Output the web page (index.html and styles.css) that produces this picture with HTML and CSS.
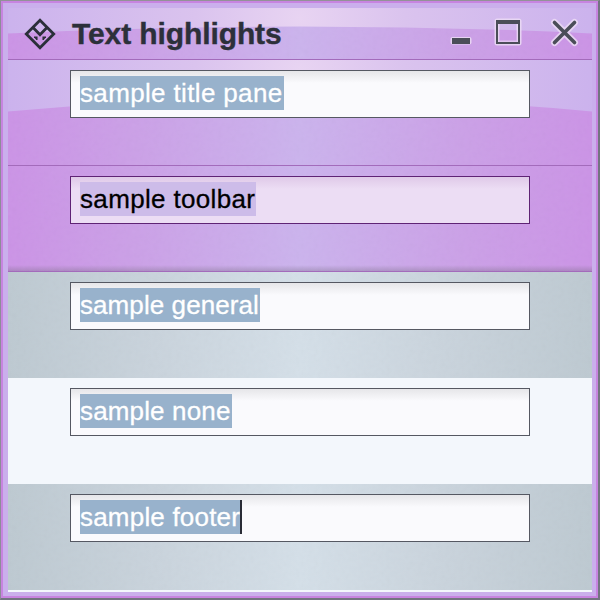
FILE: index.html
```html
<!DOCTYPE html>
<html lang="en">
<head>
<meta charset="utf-8">
<title>Text highlights</title>
<link rel="stylesheet" href="styles.css">
</head>
<body>
<main class="window">
  <div class="frame">
    <header class="titlebar">
      <svg class="gloss" viewBox="0 0 584 51" preserveAspectRatio="none"><defs><radialGradient id="shine" gradientUnits="userSpaceOnUse" cx="292" cy="10" r="300"><stop offset="0" stop-color="#e8d4f2"/><stop offset=".35" stop-color="#dac3ee"/><stop offset="1" stop-color="#cbb2ed"/></radialGradient></defs><path fill="url(#shine)" d="M0 0H584V25.5Q438 18.500 292 18.500T0 25.500Z"/></svg>
      <svg class="logo" width="32" height="32" viewBox="0 0 32 32" fill="none" stroke="#2a2f39" stroke-width="2.8"><path d="M16 2.300 29.700 16 16 29.700 2.300 16Z"/><path d="M8.500 9 16 16.800 23.500 9"/><path d="M10 19.200H12.800V22M12.800 19.200 11.300 20.700M22 19.200H19.200V22M19.200 19.200 20.700 20.700" stroke-width="1.500"/></svg>
      <h1>Text highlights</h1>
      <svg class="controls" width="152" height="40" viewBox="0 0 152 40" fill="none">
        <g stroke="#ecdcf5" stroke-opacity=".85" stroke-linejoin="round" stroke-linecap="round"><path stroke-width="4" d="M12.500 29H29.500V32.500H12.500Z"/><path stroke-width="5" d="M57 11H79V33H57Z"/><path stroke-width="7" d="M114.500 12.500 134.500 32.500M134.500 12.500 114.500 32.500"/></g>
        <path fill="#cf9fe8" fill-opacity=".25" d="M59 20H77V32H59Z"/>
        <g fill="#4b4e58"><path d="M12 28H30V34H12Z"/><path fill-rule="evenodd" d="M56 10H80V34H56ZM58 14V32H78V14Z"/></g>
        <path stroke="#4b4e58" stroke-width="3.600" stroke-linecap="round" d="M114.500 12.500 134.500 32.500M134.500 12.500 114.500 32.500"/>
      </svg>
    </header>
    <section class="pane purple">
      <svg class="gloss" viewBox="0 0 584 105" preserveAspectRatio="none"><path fill="url(#shine)" d="M0 0H584V51.500Q438 38 292 38T0 51.500Z"/></svg>
      <div class="field"><span class="mark title">sample title pane</span></div>
    </section>
    <section class="pane purple toolbar"><div class="field tinted"><span class="mark tool">sample toolbar</span></div></section>
    <section class="pane gray"><div class="field"><span class="mark general">sample general</span></div></section>
    <section class="pane none"><div class="field"><span class="mark plain">sample none</span></div></section>
    <section class="pane gray"><div class="field"><span class="mark foot">sample footer</span><i class="caret"></i></div></section>
  </div>
</main>
</body>
</html>
```
FILE: styles.css
```css
* { box-sizing: border-box; }
body { margin: 0; font-family: "Liberation Sans", sans-serif; }

.window {
  width: 600px;
  height: 600px;
  border: solid;
  border-width: 1px 2px 2px 1px;
  border-color: #929298 #727480 #727480 #8d8c98;
}
.frame {
  height: 597px;
  border: 2px solid #c784e0;
  padding: 5px 4px 4px 5px;
  background: linear-gradient(#f3f7fc, #f3f7fc) content-box, #caafec;
}

.titlebar, .purple {
  position: relative;
  border-bottom: 1px solid #a36bbb;
  background: linear-gradient(90deg, #cb93e6, #cba0e7 22%, #cbb3ed 50%, #cba0e7 78%, #cb93e6);
}
.titlebar {
  height: 52px;
  display: flex;
  align-items: center;
  padding-left: 16px;
}
.gloss {
  position: absolute;
  inset: 0;
  width: 100%;
  height: 100%;
}
.logo, .controls, h1, .field { position: relative; }
.logo { flex: none; }
h1 {
  margin: 0 auto 0 16px;
  font-size: 30px;
  line-height: 36px;
  letter-spacing: -.1px;
  -webkit-text-stroke: .4px #2c303a;
  color: #2c303a;
  white-space: nowrap;
}
.controls { flex: none; margin-top: -7px; }

.pane {
  height: 106px;
  padding: 10px 62px 0;
}
.toolbar {
  background:
    linear-gradient(0deg, rgba(115, 105, 125, .35), transparent 6px),
    linear-gradient(90deg, #cb93e6, #cba0e7 22%, #cbb3ed 50%, #cba0e7 78%, #cb93e6);
}
.gray {
  position: relative;
  background: linear-gradient(90deg, #bdc9d1, #c9d3dc 25%, #d4dfe8 50%, #c9d3dc 75%, #bdc9d1);
}
.none { background: #f3f7fc; }

/* Fine paper grain over the tinted panes, beneath their fields */
.titlebar::before, .purple::before, .gray::before {
  content: "";
  position: absolute;
  inset: 0;
  opacity: .05;
  background: url("data:image/svg+xml,%3Csvg xmlns='http://www.w3.org/2000/svg' width='292' height='106'%3E%3Cfilter id='n' x='0' y='0' width='100%25' height='100%25'%3E%3CfeTurbulence type='fractalNoise' baseFrequency='.22' numOctaves='3' stitchTiles='stitch'/%3E%3CfeColorMatrix type='saturate' values='0'/%3E%3C/filter%3E%3Crect width='292' height='106' filter='url(%23n)'/%3E%3C/svg%3E");
}

.field {
  height: 48px;
  padding: 5px 9px;
  display: flex;
  border: 1px solid #555862;
  background: linear-gradient(#e6e6e9, #fafafd 12px);
}
.tinted {
  border-color: #5f2375;
  background: linear-gradient(#dfc9e8, #ecddf4 12px);
}
.mark {
  height: 34px;
  font-size: 26px;
  line-height: 35px;
  white-space: nowrap;
  color: #fff;
  -webkit-text-stroke: .3px currentColor;
  background: #98b2cc;
}
.title { width: 204px; letter-spacing: .35px; }
.tool { width: 176px; letter-spacing: .34px; color: #000; background: #cdbce9; }
.general { width: 180px; letter-spacing: .08px; }
.plain { width: 152px; letter-spacing: .15px; }
.foot { width: 160px; letter-spacing: .2px; }
.caret { width: 2px; height: 34px; background: #292c36; }
```
